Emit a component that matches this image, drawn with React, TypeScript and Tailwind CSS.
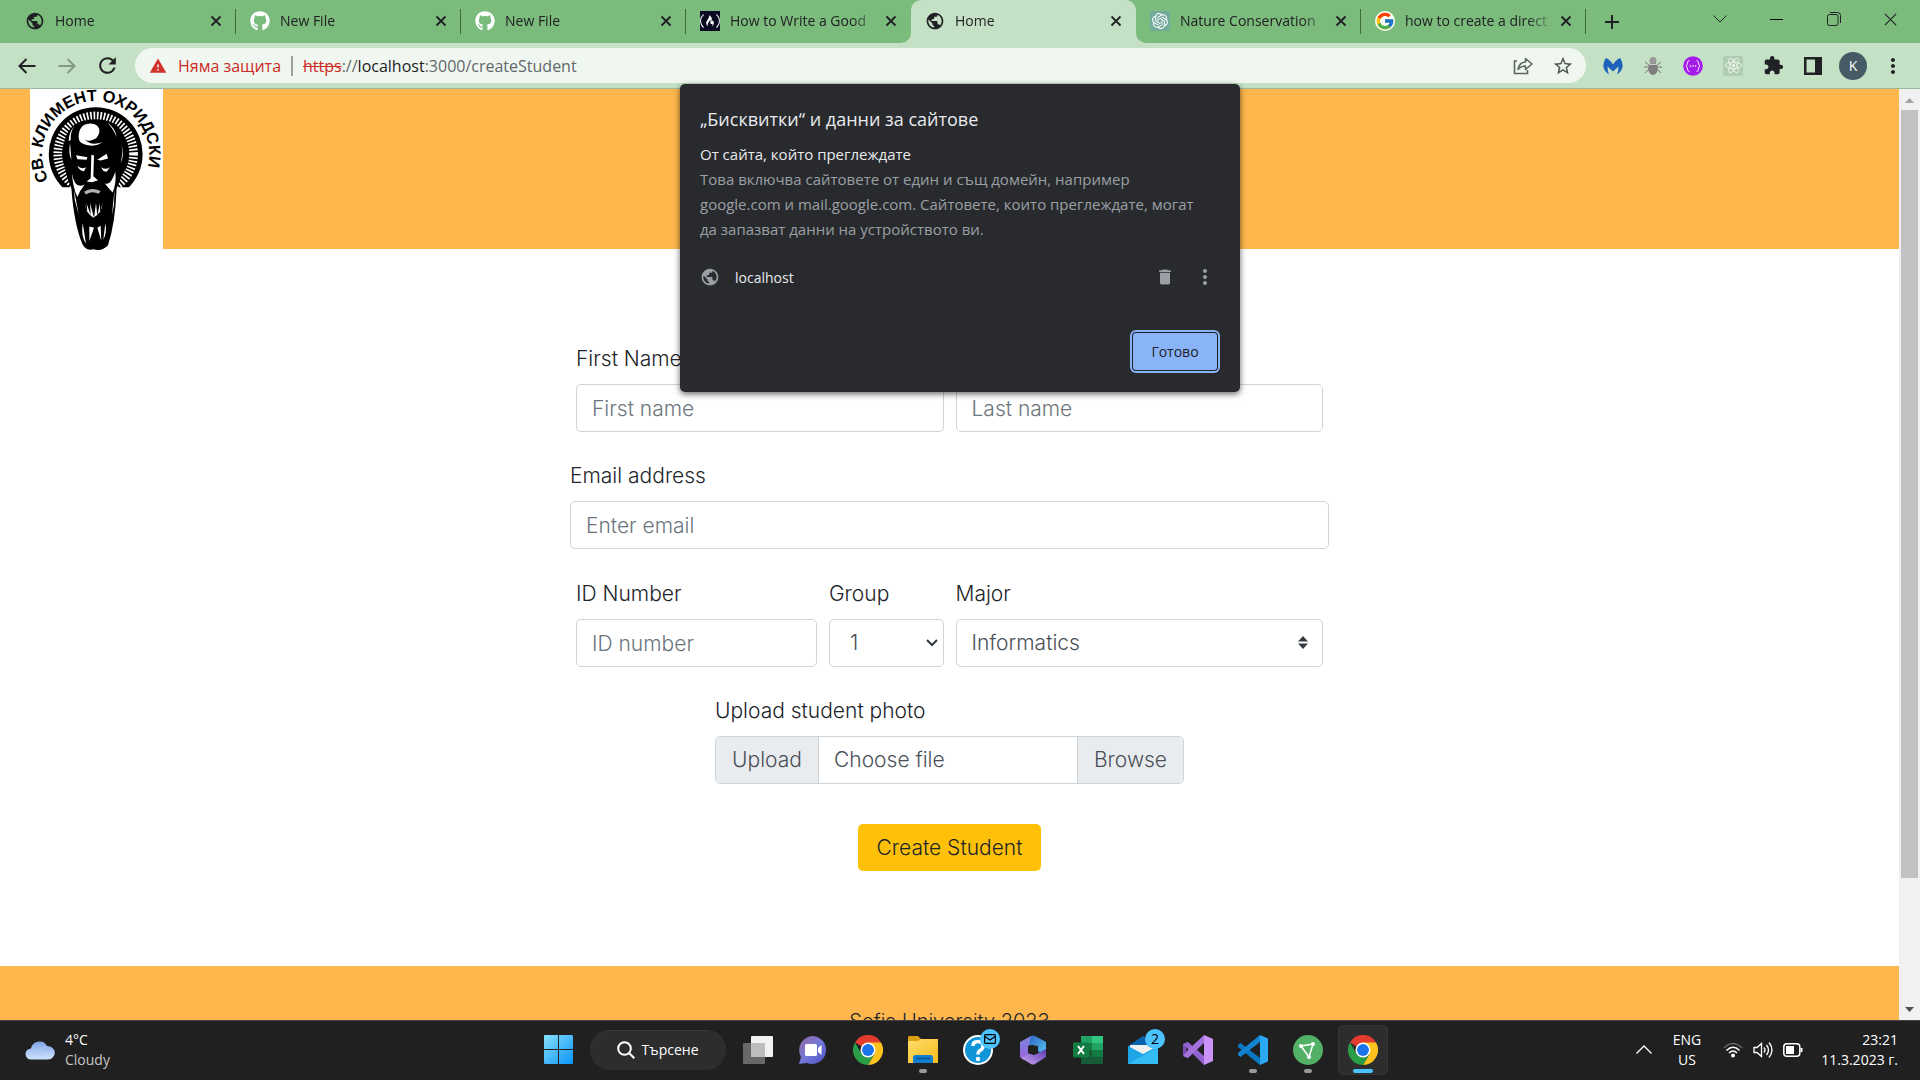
import React from "react";
import { FaGithub, FaFreeCodeCamp } from "react-icons/fa";
import { SiOpenai, SiReact } from "react-icons/si";
import { FcGoogle } from "react-icons/fc";
import { MdPublic, MdStarBorder, MdExtension, MdDelete, MdMoreVert, MdWarning, MdRefresh } from "react-icons/md";

const UI = "font-['Open_Sans','Noto_Sans',sans-serif]";

type Tab = { title: string; icon: React.ReactNode; active?: boolean; line?: boolean };

const globe = <MdPublic className="size-5 text-[#202124]" />;
const github = <FaGithub className="size-5 text-white" />;

const tabs: Tab[] = [
  { title: "Home", icon: globe, line: true },
  { title: "New File", icon: github, line: true },
  { title: "New File", icon: github, line: true },
  {
    title: "How to Write a Good",
    icon: (
      <span className="flex size-5 items-center justify-center bg-[#0a0a23]">
        <FaFreeCodeCamp className="size-5 text-white" />
      </span>
    ),
  },
  { title: "Home", icon: globe, active: true },
  {
    title: "Nature Conservation",
    icon: (
      <span className="flex size-5 items-center justify-center rounded-xs bg-[#74aa9c]">
        <SiOpenai className="size-4 text-white" />
      </span>
    ),
    line: true,
  },
  {
    title: "how to create a direct",
    icon: (
      <span className="flex size-5 items-center justify-center rounded-full bg-white">
        <FcGoogle className="size-5" />
      </span>
    ),
    line: true,
  },
];

function Cross({ className }: { className: string }) {
  return (
    <svg viewBox="0 0 12 12" className={className} fill="none" stroke="currentColor">
      <path d="M1.5 1.5 L10.5 10.5 M10.5 1.5 L1.5 10.5" />
    </svg>
  );
}

function TabStrip() {
  return (
    <div className="flex h-[43px] shrink-0 bg-[#7bbb7c] pl-[11px] text-[#202124]">
      {tabs.map((t, i) => (
        <div
          key={i}
          className={`relative flex w-[225px] shrink-0 items-center pb-[2px] pl-[14px] ${t.active ? "rounded-t-[10px] bg-[#c5e1c5]" : ""}`}
        >
          {t.active && (
            <>
              <svg viewBox="0 0 10 10" className="absolute bottom-0 -left-[10px] size-[10px] text-[#c5e1c5]">
                <path d="M10 0 V10 H0 A10 10 0 0 0 10 0Z" fill="currentColor" />
              </svg>
              <svg viewBox="0 0 10 10" className="absolute bottom-0 -right-[10px] size-[10px] text-[#c5e1c5]">
                <path d="M0 0 V10 H10 A10 10 0 0 1 0 0Z" fill="currentColor" />
              </svg>
            </>
          )}
          {t.icon}
          <span className="ml-[10px] w-[147px] whitespace-nowrap text-[14px] leading-5 [mask-image:linear-gradient(to_right,black_122px,transparent_150px)]">
            {t.title}
          </span>
          <button aria-label="Close tab" className="ml-[2px] flex size-6 shrink-0 items-center justify-center">
            <Cross className="size-3 stroke-[1.8]" />
          </button>
          {t.line && <span className="absolute top-[9px] right-0 h-[25px] w-px bg-[#3c6b3e]" />}
        </div>
      ))}
      <button aria-label="New tab" className="ml-3 flex w-7 items-center justify-center">
        <svg viewBox="0 0 16 16" className="size-4" stroke="currentColor" strokeWidth="2">
          <path d="M8 1V15M1 8H15" />
        </svg>
      </button>
      <div className="mr-px ml-auto flex h-[38px]">
        <button aria-label="Search tabs" className="flex w-[57px] items-center justify-center">
          <svg viewBox="0 0 14 8" className="h-2 w-[14px]" fill="none" stroke="currentColor"><path d="M.5.5 7 7 13.5.5" /></svg>
        </button>
        <button aria-label="Minimize" className="flex w-[57px] items-center justify-center">
          <span className="h-px w-[13px] bg-black" />
        </button>
        <button aria-label="Restore" className="flex w-[57px] items-center justify-center">
          <svg viewBox="0 0 14 14" className="size-[14px]" fill="none" stroke="currentColor">
            <rect x=".5" y="2.5" width="10.5" height="11" rx="2" />
            <path d="M3 .5H10.5Q13.5.5 13.5 3.500V11" />
          </svg>
        </button>
        <button aria-label="Close" className="flex w-[57px] items-center justify-center">
          <Cross className="size-[15px] stroke-[0.9]" />
        </button>
      </div>
    </div>
  );
}

function Toolbar() {
  const ext = "flex w-10 items-center justify-center";
  return (
    <div className="flex h-[46px] shrink-0 items-center border-b border-[#9fb8a0] bg-[#c5e1c5] pr-[7px] pl-[7px] text-[#202124]">
      <button aria-label="Back" className="flex w-10 items-center justify-center">
        <svg viewBox="0 0 18 16" className="h-4 w-[18px]" fill="none" stroke="currentColor" strokeWidth="2"><path d="M17.500 8H2M8.500 1 1.500 8l7 7" /></svg>
      </button>
      <button aria-label="Forward" className="flex w-10 items-center justify-center text-[#839a85]">
        <svg viewBox="0 0 18 16" className="h-4 w-[18px]" fill="none" stroke="currentColor" strokeWidth="2"><path d="M.5 8H16M9.500 1l7 7-7 7" /></svg>
      </button>
      <button aria-label="Reload" className="flex w-10 items-center justify-center">
        <MdRefresh className="size-[25px]" />
      </button>
      <div className="ml-2 flex h-[35px] flex-1 items-center rounded-full bg-[#f0f7f0] pr-[3px] pl-[14px] text-[16px]">
        <MdWarning className="size-[18px] text-[#d0312a]" />
        <span className="ml-[11px] whitespace-nowrap text-[#cc2b26]">Няма защита</span>
        <span className="mx-[10px] h-5 w-[2px] bg-[#9aa09b]" />
        <span className="flex-1 text-[#61676a]">
          <span className="text-[#cc2b26] line-through">https</span>://<span className="text-[#202124]">localhost</span>:3000/createStudent
        </span>
        <button aria-label="Share" className="flex w-10 items-center justify-center">
          <svg viewBox="0 0 20 18" className="h-[18px] w-5" fill="none" stroke="#5c6460" strokeWidth="1.6">
            <path d="M4 4H1.500V16.500H14.500V13" />
            <path d="M5 12.500Q6 5.500 12.500 5V1.500L19 7l-6.500 5.500V9Q8 9 5 12.500Z" strokeLinejoin="round" />
          </svg>
        </button>
        <button aria-label="Bookmark" className="flex w-10 items-center justify-center">
          <MdStarBorder className="size-[22px] text-[#4d5451]" />
        </button>
      </div>
      <div className="ml-[7px] flex">
        <button aria-label="Malwarebytes" className={ext}>
          <svg viewBox="0 0 20 18" className="h-[18px] w-5 text-[#1c62bb]"><path fill="currentColor" d="M3 1Q7 2.500 10 7.500 13 2.500 17 1q3 4 2.500 9-1 5-5.500 7.500 1.500-3 1.500-8L10 14.500 4.500 9.500q0 5 1.500 8Q1.500 15 .5 10 0 5 3 1Z" /></svg>
        </button>
        <button aria-label="Bug" className={ext}>
          <svg viewBox="0 0 20 20" className="size-5">
            <path d="M2 6l4 3M18 6l-4 3M1 11h18M2 17l4-4M18 17l-4-4" stroke="#777" strokeWidth="1" />
            <ellipse cx="10" cy="12.500" rx="4.800" ry="6.500" fill="#7e7e7e" />
            <circle cx="10" cy="4.500" r="3.500" fill="#999" />
            <path d="M6 8.500h8" stroke="#ccc" />
          </svg>
        </button>
        <button aria-label="JSON" className={ext}>
          <svg viewBox="0 0 20 20" className="size-5">
            <circle cx="10" cy="10" r="9.800" fill="#a41cea" />
            <path d="M6.500 4.500Q4.500 4.500 4.500 7T3 10q1.500.5 1.500 3t2 2.500M13.500 4.500q2 0 2 2.500T17 10q-1.500.5-1.500 3t-2 2.500" fill="none" stroke="#f4d8ff" strokeWidth="1" />
            <circle cx="7.500" cy="10" r=".8" fill="#fff" /><circle cx="10" cy="10" r=".8" fill="#fff" /><circle cx="12.500" cy="10" r=".8" fill="#fff" />
          </svg>
        </button>
        <button aria-label="React" className={ext}>
          <span className="flex size-5 items-center justify-center rounded-xs bg-[#b0cdb2]"><SiReact className="size-[17px] text-[#eef7ee]" /></span>
        </button>
        <button aria-label="Extensions" className={ext}><MdExtension className="size-[21px]" /></button>
        <button aria-label="Side panel" className={ext}>
          <svg viewBox="0 0 18 18" className="size-[18px]"><path fill="currentColor" fillRule="evenodd" d="M0 0H18V18H0ZM2.500 2.500V15.500H11V2.500Z" /></svg>
        </button>
        <button aria-label="Profile" className={ext}>
          <span className="flex size-7 items-center justify-center rounded-full bg-[#455a64] text-[14px] text-white">K</span>
        </button>
        <button aria-label="Menu" className={ext}><MdMoreVert className="size-6" /></button>
      </div>
    </div>
  );
}

function Crest() {
  return (
    <svg viewBox="90 27 399 487" className="h-[162px] w-[133px] shrink-0 bg-white" role="img" aria-label="Св. Климент Охридски">
      <defs>
        <path id="arc" d="M145 300 A161 161 0 1 1 429 300" />
      </defs>
      <text fontFamily="Liberation Sans" fontWeight="700" fontSize="49" fill="#000">
        <textPath href="#arc" startOffset="0">СВ. КЛИМЕНТ ОХРИДСКИ</textPath>
      </text>
      <path d="M190 325A141 141 0 1 1 384 325Z" fill="#000" />
      <circle cx="287" cy="222" r="114" fill="none" stroke="#fff" strokeWidth="26" strokeDasharray="5 5" />
      <path d="M150 322H216L222 420 150 400ZM424 322H350L344 420 424 400Z" fill="#fff" />
      <path d="M287 118Q190 118 190 215q0 60 24 110 8 110 34 170 12 20 32 14 26 8 44-12Q346 430 350 325q26-50 28-110Q380 118 287 118Z" fill="#000" />
      <g fill="#fff">
        <path d="M236 165q4-34 36-34 28 2 26 26-4 20-24 24-10 4-20-2 18 20 54 8-30 20-64 2-10-8-8-24Z" />
        <path d="M222 140q-12 20-10 40l-6 4q0-26 16-44ZM322 128q24 16 28 44-8-22-28-44ZM364 190q6 30-2 60 12-20 2-60ZM210 190l4 50q-10-20-4-50Z" />
        <path d="M228 226l34 6-2 8-28-2ZM292 240l28-18 4 14-22 6ZM274 225l8 2-2 62 14 12-18 6-16-2 12-10Z" />
        <path d="M232 258q12 12 26 4l-6 12q-14 0-20-16ZM304 262q12 10 26 0l-10 14q-12 0-16-14Z" />
        <path d="M216 280q8 50 38 34-16 20-22 38-14-30-16-72ZM314 310q18 10 32-34 4 34-8 62-10-10-24-28Z" />
        <path d="M252 336q22-16 50-2l-6 8q-20-10-38 2Z" opacity=".7" />
        <path d="M254 372l8 26-2-26 12 34-2-36 12 44 6-44 4 38 8-38v28l8-28q-2 30-28 44-22-14-26-42Z" />
        <path d="M248 430l10 62q-16-22-10-62ZM268 440l14 4-14 40ZM292 444l10-6 2 46ZM316 430l-6 50q12-20 6-50Z" />
        <path d="M222 330l14 74-12-44ZM344 326l-8 80 6-30Z" />
      </g>
    </svg>
  );
}

const field = "block h-[48px] w-full rounded-[5px] border border-[#ced4da] bg-white px-[15px] text-[#495057] placeholder:text-[#6c757d]";
const labelCls = "mb-[10px] block leading-[30px] text-[#212529]";

function StudentForm() {
  return (
    <form className="mx-auto w-full max-w-[759px]" onSubmit={(e) => e.preventDefault()}>
      <div className="mb-[29px] grid grid-cols-2">
        <div className="px-[6px]">
          <label htmlFor="first" className={labelCls}>First Name</label>
          <input id="first" placeholder="First name" className={field} />
        </div>
        <div className="px-[6px]">
          <label htmlFor="last" className={labelCls}>Last Name</label>
          <input id="last" placeholder="Last name" className={field} />
        </div>
      </div>
      <div className="mb-[30px]">
        <label htmlFor="email" className={labelCls}>Email address</label>
        <input id="email" type="email" placeholder="Enter email" className={field} />
      </div>
      <div className="mb-[29px] grid grid-cols-12">
        <div className="col-span-4 px-[6px]">
          <label htmlFor="idn" className={labelCls}>ID Number</label>
          <input id="idn" placeholder="ID number" className={field} />
        </div>
        <div className="col-span-2 px-[6px]">
          <label htmlFor="group" className={labelCls}>Group</label>
          <div className="relative">
            <select id="group" className={`${field} appearance-none pl-5`}><option>1</option><option>2</option></select>
            <svg viewBox="0 0 12 8" className="pointer-events-none absolute top-5 right-[6px] h-2 w-3" fill="none" stroke="#343a40" strokeWidth="2"><path d="M1 1l5 5 5-5" /></svg>
          </div>
        </div>
        <div className="col-span-6 px-[6px]">
          <label htmlFor="major" className={labelCls}>Major</label>
          <div className="relative">
            <select id="major" className={`${field} appearance-none`}><option>Informatics</option></select>
            <svg viewBox="0 0 10 13" className="pointer-events-none absolute top-[17px] right-[15px] h-[13px] w-[10px]" fill="#343a40"><path d="M5 0 10 5.500H0ZM5 13 0 7.500H10Z" /></svg>
          </div>
        </div>
      </div>
      <div className="mx-auto w-[469px]">
        <label htmlFor="photo" className={labelCls}>Upload student photo</label>
        <input id="photo" type="file" className="sr-only" />
        <label htmlFor="photo" className="flex h-[48px] overflow-hidden rounded-[5px] border border-[#ced4da] leading-[46px] text-[#495057]">
          <span className="w-[103px] border-r border-[#ced4da] bg-[#e9ecef] text-center">Upload</span>
          <span className="flex-1 px-[15px]">Choose file</span>
          <span className="w-[106px] border-l border-[#ced4da] bg-[#e9ecef] text-center">Browse</span>
        </label>
      </div>
      <button type="submit" className="mx-auto mt-10 block h-[47px] w-[183px] rounded-[5px] bg-[#ffc107] text-[#212529]">Create Student</button>
    </form>
  );
}

function CookieDialog() {
  return (
    <div role="dialog" aria-label="Бисквитки" className={`absolute top-[84px] left-1/2 w-[560px] -translate-x-1/2 rounded-[5px] bg-[#292a2d] px-5 pt-[21px] pb-[22px] shadow-[0_2px_6px_rgba(0,0,0,0.6)] ${UI}`}>
      <h2 className="text-[18px] leading-7 text-[#e8eaed]">„Бисквитки“ и данни за сайтове</h2>
      <p className="mt-[9px] text-[15px] leading-[25px] text-[#e8eaed]">От сайта, който преглеждате</p>
      <p className="text-[15px] leading-[25px] whitespace-nowrap text-[#9aa0a6]">
        Това включва сайтовете от един и същ домейн, например
        <br />
        google.com и mail.google.com. Сайтовете, които преглеждате, могат
        <br />
        да запазват данни на устройството ви.
      </p>
      <div className="mt-[15px] flex h-10 items-center text-[14px] text-[#e8eaed]">
        <MdPublic className="size-5 text-[#9aa0a6]" />
        <span className="ml-[15px] flex-1">localhost</span>
        <button aria-label="Delete" className="flex w-10 items-center justify-center"><MdDelete className="size-5 text-[#9aa0a6]" /></button>
        <button aria-label="More" className="-mr-[5px] flex w-10 items-center justify-center"><MdMoreVert className="size-6 text-[#9aa0a6]" /></button>
      </div>
      <button className="mt-9 mr-[3px] ml-auto block h-[37px] w-[84px] rounded-[3px] bg-[#8ab4f8] text-[14px] text-[#202124] ring-2 ring-[#8ab4f8] ring-offset-1 ring-offset-[#202124]">Готово</button>
    </div>
  );
}

function ChromeLogo() {
  return (
    <svg viewBox="0 0 48 48" className="size-[30px]">
      <path d="M24 24 3.200 12A24 24 0 0 1 44.800 12Z" fill="#e33b2e" />
      <path d="M24 24H24V12H44.800A24 24 0 0 1 24 48L34.400 30Z" fill="#fcc31e" />
      <path d="M24 24 34.400 30 24 48A24 24 0 0 1 3.200 12L13.600 30Z" fill="#2a9d47" />
      <circle cx="24" cy="24" r="12" fill="#fff" />
      <circle cx="24" cy="24" r="9.500" fill="#1a73e8" />
    </svg>
  );
}

const dot = <span className="absolute bottom-[5px] left-1/2 h-1 w-2 -translate-x-1/2 rounded-full bg-[#9a9a9a]" />;

const apps: { name: string; art: React.ReactNode; extra?: React.ReactNode; active?: boolean }[] = [
  {
    name: "Task view",
    art: (
      <svg viewBox="0 0 30 28" className="h-7 w-[30px]">
        <rect y="7" width="22" height="21" rx="1" fill="#686868" />
        <rect x="8" width="22" height="21" rx="1" fill="#f2f2f2" />
        <path d="M8 7H22V21H8Z" fill="#bdbdbd" />
      </svg>
    ),
  },
  {
    name: "Chat",
    art: (
      <svg viewBox="0 0 30 30" className="size-[30px]">
        <defs><linearGradient id="chat" x1="0" y1="0" x2="1" y2="1"><stop stopColor="#9a6a9e" /><stop offset=".5" stopColor="#7278d8" /><stop offset="1" stopColor="#4b50c4" /></linearGradient></defs>
        <path d="M15 1A14 14 0 1 1 9 28L1 29 3 22A14 14 0 0 1 15 1Z" fill="url(#chat)" />
        <rect x="7" y="9" width="12" height="12" rx="1.500" fill="#fff" />
        <path d="M20 13 23.500 10V20L20 17Z" fill="#fff" />
      </svg>
    ),
  },
  { name: "Chrome", art: <ChromeLogo /> },
  {
    name: "Explorer",
    art: (
      <svg viewBox="0 0 30 27" className="h-[27px] w-[30px]">
        <defs><linearGradient id="fold" x1="0" y1="0" x2="1" y2="1"><stop stopColor="#ffdc6b" /><stop offset="1" stopColor="#f9bd1f" /></linearGradient></defs>
        <path d="M0 1.500Q0 0 1.500 0H10L13 3V8H0Z" fill="#dfa010" />
        <path d="M0 5H10L13 3H30V27H0Z" fill="url(#fold)" />
        <path d="M5 27V21.500Q5 19 7.500 19H22.500Q25 19 25 21.500V27Z" fill="#127fd0" />
        <path d="M8 22.500H22" stroke="#075494" strokeWidth="1.500" />
      </svg>
    ),
    extra: dot,
  },
  {
    name: "Get Help",
    art: (
      <svg viewBox="0 0 30 30" className="size-[30px]">
        <circle cx="15" cy="15" r="14" fill="#0f96d8" stroke="#fff" strokeWidth="2" />
        <path d="M10 11Q10 6.500 15 6.500t5 4.500q0 3-3 4.500-2 1-2 4" fill="none" stroke="#fff" strokeWidth="3.500" />
        <circle cx="15" cy="24" r="2.200" fill="#fff" />
      </svg>
    ),
    extra: (
      <span className="absolute top-2 right-[5px] flex size-5 items-center justify-center rounded-full bg-[#4cc2ff]">
        <svg viewBox="0 0 12 10" className="h-[10px] w-3" fill="none" stroke="#000" strokeWidth="1.200"><rect x=".6" y=".6" width="10.800" height="8.800" rx="1" /><path d="M1 2.500 6 6l5-3.500" /></svg>
      </span>
    ),
  },
  {
    name: "Microsoft 365",
    art: (
      <svg viewBox="0 0 28 30" className="h-[30px] w-7">
        <defs>
          <linearGradient id="ma" x1="0" y1="0" x2="0" y2="1"><stop stopColor="#7a86e0" /><stop offset="1" stopColor="#9a62dc" /></linearGradient>
          <linearGradient id="mb" x1="0" y1="0" x2="1" y2="1"><stop stopColor="#2f62c4" /><stop offset="1" stopColor="#55ccf5" /></linearGradient>
          <linearGradient id="mc" x1="0" y1="1" x2="1" y2="0"><stop stopColor="#d0a8f8" /><stop offset="1" stopColor="#5b3ab0" /></linearGradient>
        </defs>
        <path d="M12 1 1 7V22L5 25 9 20V11L18 6Z" fill="url(#ma)" />
        <path d="M12 1Q14 0 16 1L27 7V22L19 16V11L10 10Z" fill="url(#mb)" />
        <path d="M2 23 12 17 15 20 27 14V22L16 29Q14 30 12 29Z" fill="url(#mc)" />
        <path d="M14 10 19 12.500V18L14 20 9.500 18V12.500Z" fill="#202020" />
      </svg>
    ),
  },
  {
    name: "Excel",
    art: (
      <svg viewBox="0 0 30 28" className="h-7 w-[30px]">
        <path d="M8 0H19V7H8Z" fill="#21a366" /><path d="M19 0H30V7H19Z" fill="#33c481" />
        <path d="M8 7H19V14H8Z" fill="#107c41" /><path d="M19 7H30V14H19Z" fill="#21a366" />
        <path d="M8 14H30V28H8Z" fill="#185c37" /><path d="M19 14H30V21H19Z" fill="#107c41" />
        <rect y="6.500" width="16" height="15" rx="1" fill="#107c41" />
        <path d="M5 10l6 8M11 10l-6 8" stroke="#fff" strokeWidth="2" />
      </svg>
    ),
  },
  {
    name: "Mail",
    art: (
      <svg viewBox="0 0 30 28" className="h-7 w-[30px]">
        <path d="M0 10 15 0 30 10V20H0Z" fill="#0b62ad" />
        <path d="M2 9H28V20H2Z" fill="#f0f0f0" />
        <path d="M0 10 15 18 30 10V28H0Z" fill="#1ea5e8" />
        <path d="M0 28 30 11V28Z" fill="#34bdf4" />
      </svg>
    ),
    extra: <span className="absolute top-2 right-[5px] flex size-5 items-center justify-center rounded-full bg-[#4cc2ff] text-[14px] text-black">2</span>,
  },
  {
    name: "Visual Studio",
    art: (
      <svg viewBox="0 0 30 30" className="size-[30px]">
        <path d="M0 9 5 7V11L3.500 12V18L5 19V23L0 21Z" fill="#7b4db6" />
        <path d="M5 7 21 21V30L0 9Z" fill="#9463d2" />
        <path d="M0 21 5 23 21 8V0L5 15Z" fill="#a472dc" />
        <path d="M21 0 30 4V26L21 30Z" fill="#cb93f7" />
      </svg>
    ),
  },
  {
    name: "VS Code",
    art: (
      <svg viewBox="0 0 30 30" className="size-[30px]">
        <path d="M0 10 2.500 8 22 23V30L0 12Z" fill="#0a79c4" />
        <path d="M0 20 2.500 22 22 7V0L0 18Z" fill="#1185d1" />
        <path d="M22 0 30 3.500V26.500L22 30Z" fill="#2aa8f2" />
      </svg>
    ),
    extra: dot,
  },
  {
    name: "Node graph",
    art: (
      <svg viewBox="0 0 30 30" className="size-[30px]">
        <circle cx="15" cy="15" r="15" fill="#52b166" />
        <path d="M8 11 20 9 16 22Z" fill="none" stroke="#fff" strokeWidth="1.500" />
        <circle cx="8" cy="11" r="2" fill="#fff" /><circle cx="20" cy="9" r="2" fill="#fff" /><circle cx="16" cy="22" r="2" fill="#fff" />
      </svg>
    ),
    extra: dot,
  },
  {
    name: "Chrome window",
    art: <ChromeLogo />,
    active: true,
    extra: <span className="absolute bottom-[5px] left-1/2 h-1 w-5 -translate-x-1/2 rounded-full bg-[#4cc2ff]" />,
  },
];

function Taskbar() {
  return (
    <div className="grid h-[60px] shrink-0 grid-cols-[1fr_auto_1fr] items-center border-t border-[#454545] bg-[#202020] pb-[2px] text-[14px] leading-5 text-white">
      <button className="flex items-center pl-[25px] text-left">
        <svg viewBox="0 0 30 20" className="h-5 w-[30px]">
          <defs><linearGradient id="cl" x1="0" y1="0" x2="0" y2="1"><stop stopColor="#7da6ea" /><stop offset="1" stopColor="#cfe2fb" /></linearGradient></defs>
          <path d="M6 8.500A8.500 8 0 0 1 22 6 7 6.500 0 0 1 23 19.500H6A5.500 5.500 0 0 1 6 8.500Z" fill="url(#cl)" />
          <path d="M5 9Q10 7 13 11 17 6 22 7 18 9 17 12H9Z" fill="#a9c6f4" opacity=".7" />
        </svg>
        <span className="ml-[10px]">4°C<br /><span className="text-[#c5c5c5]">Cloudy</span></span>
      </button>
      <div className="flex h-[57px] items-center pl-px">
        <button aria-label="Start" className="flex w-[55px] justify-center">
          <svg viewBox="0 0 29 29" className="size-[29px]">
            <defs><linearGradient id="win" x1="0" y1="0" x2="1" y2="1"><stop stopColor="#86e1fb" /><stop offset="1" stopColor="#0a93fa" /></linearGradient></defs>
            <path d="M0 1Q0 0 1 0H14V14H0ZM15 0H28Q29 0 29 1V14H15ZM0 15H14V29H1Q0 29 0 28ZM15 15H29V28Q29 29 28 29H15Z" fill="url(#win)" />
          </svg>
        </button>
        <button className="mx-1 flex h-10 w-[136px] items-center justify-center gap-[6px] rounded-full border-t border-[#3a3a3a] bg-[#2d2d2d]">
          <svg viewBox="0 0 18 18" className="size-[18px]" fill="none" stroke="#fff" strokeWidth="2"><circle cx="7.500" cy="7.500" r="6.300" /><path d="M12 12l5.300 5.300" /></svg>
          Търсене
        </button>
        {apps.map((a) => (
          <button key={a.name} aria-label={a.name} className="relative flex h-full w-[55px] items-center justify-center">
            <span className={`flex h-[50px] w-[50px] items-center justify-center rounded-[5px] ${a.active ? "border border-[#363636] bg-[#2d2d2d]" : ""}`}>{a.art}</span>
            {a.extra}
          </button>
        ))}
      </div>
      <div className="flex items-center justify-end pr-[22px]">
        <svg viewBox="0 0 16 9" className="h-[9px] w-4" fill="none" stroke="#fff" strokeWidth="1.300"><path d="M.5 8.500 8 1l7.500 7.500" /></svg>
        <span className="mr-[22px] ml-[21px] text-center">ENG<br />US</span>
        <svg viewBox="0 0 20 16" className="h-4 w-5" fill="none" strokeWidth="1.500">
          <path d="M.8 6Q10-3 19.200 6" stroke="#666" /><path d="M3.500 8.500Q10 2 16.500 8.500M6 11q4-4 8 0" stroke="#fff" /><circle cx="10" cy="13.500" r="2" fill="#fff" />
        </svg>
        <svg viewBox="0 0 20 18" className="ml-[10px] h-[18px] w-5" fill="none" stroke="#fff" strokeWidth="1.300">
          <path d="M1 6.500V11.500H4L8.500 15.500V2.500L4 6.500ZM11 6.500q2 2.500 0 5M13.500 4q4 5 0 10M16 1.500q6 7.500 0 15" />
        </svg>
        <svg viewBox="0 0 20 14" className="ml-[10px] h-[14px] w-5" fill="none" stroke="#fff" strokeWidth="1.500">
          <rect x=".8" y=".8" width="16" height="12.400" rx="3" /><path d="M3 3H11V11H3Z" fill="#fff" stroke="none" /><path d="M18.500 5V9" strokeWidth="2" />
        </svg>
        <span className="ml-[18px] text-right">23:21<br />11.3.2023 г.</span>
      </div>
    </div>
  );
}

export default function App() {
  return (
    <div className={`relative flex h-screen flex-col overflow-hidden bg-white ${UI}`}>
      <TabStrip />
      <Toolbar />
      <div className="flex min-h-0 flex-1">
        <div className="min-w-0 flex-1 overflow-hidden font-['Inter',sans-serif] text-[21px] font-light">
          <header className="flex h-40 items-start bg-[#ffb74d] pl-[30px]"><Crest /></header>
          <main className="pt-[95px] pb-[95px]"><StudentForm /></main>
          <footer className="bg-[#ffb74d] py-10 text-center text-[20px] leading-[30px] text-[#212529]">Sofia University 2023</footer>
        </div>
        <div className="flex w-[21px] shrink-0 flex-col items-center bg-[#f1f1f1]">
          <svg viewBox="0 0 21 21" className="size-[21px] shrink-0"><path d="M6 14 10.500 9 15 14Z" fill="#a3a3a3" /></svg>
          <div className="mb-auto h-[82.5%] w-[17px] bg-[#c1c1c1]" />
          <svg viewBox="0 0 21 21" className="size-[21px] shrink-0"><path d="M6 8 10.500 13 15 8Z" fill="#505050" /></svg>
        </div>
      </div>
      <Taskbar />
      <CookieDialog />
    </div>
  );
}
